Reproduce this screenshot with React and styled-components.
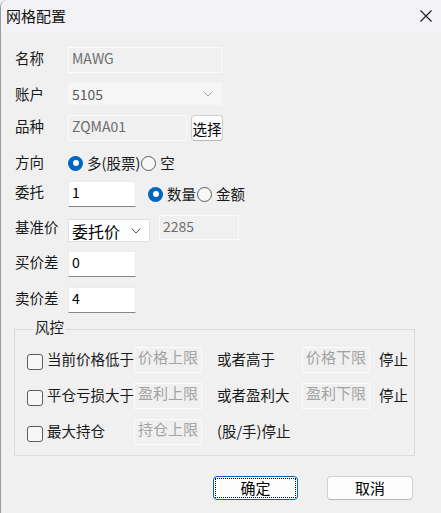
import React from 'react';
import styled, { createGlobalStyle } from 'styled-components';

const GlobalStyle = createGlobalStyle`
  html, body {
    margin: 0;
    padding: 0;
    background: #f0f0f0;
  }
  body {
    font-family: "Noto Sans CJK SC", "Noto Sans", sans-serif;
    font-size: 14.5px;
    color: #1a1a1a;
  }
  * {
    box-sizing: border-box;
  }
`;

const Window = styled.div`
  width: 441px;
  height: 513px;
  background: #f0f0f0;
  border-left: 1px solid #9c9c9c;
  border-top-left-radius: 7px;
  overflow: hidden;
  display: flex;
  flex-direction: column;
`;

const TitleBar = styled.div`
  height: 32px;
  flex: none;
  background: #f3f3f5;
  display: flex;
  align-items: center;
  justify-content: space-between;
  padding: 0 9px 0 5px;
`;

const Title = styled.div`
  font-size: 15px;
  line-height: 20px;
  color: #111;
`;

const Form = styled.div`
  display: flex;
  flex-direction: column;
  padding-left: 14px;
`;

const Row = styled.div`
  display: flex;
  align-items: center;
  height: ${(p) => p.$h}px;
  margin-top: ${(p) => p.$mt}px;
`;

const Label = styled.span`
  width: 53px;
  flex: none;
  line-height: 20px;
  margin-bottom: ${(p) => p.$lift ?? 4}px;
  white-space: nowrap;
`;

const Field = styled.input`
  width: ${(p) => p.$w}px;
  height: ${(p) => p.$h || 26}px;
  font-family: inherit;
  font-size: 14px;
  padding: 0 3px 4px;
  outline: none;
  border-radius: 0;
  ${(p) =>
    p.$editable
      ? `
    background: #ffffff;
    color: #000;
    border: 1px solid #ececec;
    border-bottom: 1px solid #868686;
  `
      : `
    background: #f0f0f0;
    color: #6d6d6d;
    border: 1px solid #fafafa;
  `}
  align-self: ${(p) => p.$align || 'center'};
`;

const SelectBox = styled.div`
  width: ${(p) => p.$w}px;
  height: ${(p) => p.$h}px;
  display: flex;
  align-items: center;
  justify-content: space-between;
  padding: 0 8px 0 3px;
  border: 1px solid ${(p) => (p.$light ? '#f6f6f6' : '#e2e2e2')};
  background: ${(p) => (p.$light ? '#f6f6f6' : '#ffffff')};
  color: ${(p) => (p.$light ? '#5a5a5a' : '#000')};
  font-size: ${(p) => p.$fs}px;
  line-height: 20px;
  align-self: ${(p) => p.$align || 'center'};
`;

const Chevron = ({ color }) => (
  <svg width="10" height="6" viewBox="0 0 10 6">
    <path d="M0.5 0.5 L5 5 L9.5 0.5" fill="none" stroke={color} strokeWidth="1" />
  </svg>
);

const SmallButton = styled.button`
  width: 32px;
  height: 26px;
  margin-left: 4px;
  padding: 0;
  font-family: inherit;
  font-size: 14.5px;
  color: #000;
  background: #fdfdfd;
  border: 1px solid #d0d0d0;
  border-bottom-color: #b8b8b8;
  border-radius: 4px;
`;

const RadioItem = styled.label`
  display: flex;
  align-items: center;
  gap: 4px;
  margin-left: ${(p) => p.$ml || 0}px;
  line-height: 20px;
  white-space: nowrap;
`;

const RadioDot = styled.span`
  width: 15px;
  height: 15px;
  flex: none;
  border-radius: 50%;
  ${(p) =>
    p.$checked
      ? `
    background: #0067c0;
    border: 4.5px solid #0067c0;
    box-shadow: inset 0 0 0 3px #ffffff;
    background: #0067c0;
  `
      : `
    background: #f7f7f7;
    border: 1px solid #5c5c5c;
  `}
`;

const CheckedDot = styled.span`
  width: 15px;
  height: 15px;
  flex: none;
  border-radius: 50%;
  background: #0067c0;
  display: flex;
  align-items: center;
  justify-content: center;
  &::before {
    content: '';
    width: 6px;
    height: 6px;
    border-radius: 50%;
    background: #ffffff;
  }
`;

const Group = styled.fieldset`
  width: 401px;
  margin: 5px 0 0 -1px;
  padding: 0 0 10px 12px;
  border: 1px solid #dcdcdc;
  min-inline-size: 0;
`;

const Legend = styled.legend`
  margin-left: 6px;
  padding: 0 2px 4px;
  font-size: 14.5px;
  line-height: 18px;
`;

const GroupRow = styled.div`
  display: flex;
  align-items: center;
  height: 26px;
  margin-top: ${(p) => p.$mt}px;
`;

const CheckLabel = styled.label`
  width: 107px;
  flex: none;
  display: flex;
  align-items: center;
  gap: 4px;
  white-space: nowrap;
  line-height: 20px;
`;

const CheckBox = styled.span`
  width: 16px;
  height: 16px;
  flex: none;
  border: 1px solid #5c5c5c;
  border-radius: 3px;
  background: #f7f7f7;
  margin-top: 4px;
`;

const CheckText = styled.span`
  margin-bottom: 2px;
`;

const LimitBox = styled.div`
  width: 68px;
  height: 26px;
  flex: none;
  border: 1px solid #fbfbfb;
  background: #f0f0f0;
  color: #a3a3a3;
  font-size: 15px;
  line-height: 18px;
  padding: 0 0 0 3px;
`;

const Plain = styled.span`
  width: ${(p) => (p.$w ? `${p.$w}px` : 'auto')};
  flex: none;
  margin-left: ${(p) => p.$ml}px;
  line-height: 20px;
  margin-bottom: 2px;
  white-space: nowrap;
`;

const Footer = styled.div`
  display: flex;
  justify-content: flex-end;
  gap: 29px;
  padding-right: 28px;
  margin-top: 20px;
`;

const DialogButton = styled.button`
  position: relative;
  width: ${(p) => p.$w}px;
  height: 24px;
  padding: 0 0 2px;
  font-family: inherit;
  font-size: 15px;
  color: #000;
  background: #fdfdfd;
  border-radius: 4px;
  border: 1px solid ${(p) => (p.$primary ? '#0067c0' : '#d0d0d0')};
  border-bottom-color: ${(p) => (p.$primary ? '#0067c0' : '#b8b8b8')};
  &::after {
    content: '';
    display: ${(p) => (p.$primary ? 'block' : 'none')};
    position: absolute;
    inset: 1px;
    border: 1px dotted #000;
    border-radius: 1px;
  }
`;

const CloseIcon = () => (
  <svg width="12" height="12" viewBox="0 0 12 12">
    <path d="M0.5 0.5 L11.5 11.5 M11.5 0.5 L0.5 11.5" stroke="#1a1a1a" strokeWidth="1.1" />
  </svg>
);

const limitRows = [
  { check: '当前价格低于', a: '价格上限', mid: '或者高于', b: '价格下限', tail: '停止' },
  { check: '平仓亏损大于', a: '盈利上限', mid: '或者盈利大', b: '盈利下限', tail: '停止' },
  { check: '最大持仓', a: '持仓上限', mid: '(股/手)停止' },
];

export default function App() {
  return (
    <>
      <GlobalStyle />
      <Window>
        <TitleBar>
          <Title>网格配置</Title>
          <CloseIcon />
        </TitleBar>
        <Form>
          <Row $h={26} $mt={15}>
            <Label>名称</Label>
            <Field $w={154} defaultValue="MAWG" readOnly />
          </Row>
          <Row $h={22} $mt={10}>
            <Label $lift={1}>账户</Label>
            <SelectBox $w={154} $h={22} $fs={14} $light>
              <span>5105</span>
              <Chevron color="#a8a8a8" />
            </SelectBox>
          </Row>
          <Row $h={26} $mt={10}>
            <Label>品种</Label>
            <Field $w={119} defaultValue="ZQMA01" readOnly />
            <SmallButton>选择</SmallButton>
          </Row>
          <Row $h={24} $mt={10}>
            <Label $lift={2}>方向</Label>
            <RadioItem>
              <CheckedDot />
              多(股票)
            </RadioItem>
            <RadioItem $ml={1}>
              <RadioDot />
              空
            </RadioItem>
          </Row>
          <Row $h={26} $mt={6}>
            <Label>委托</Label>
            <Field $w={68} $editable defaultValue="1" />
            <RadioItem $ml={12}>
              <CheckedDot />
              数量
            </RadioItem>
            <RadioItem $ml={1}>
              <RadioDot />
              金额
            </RadioItem>
          </Row>
          <Row $h={27} $mt={8}>
            <Label $lift={3}>基准价</Label>
            <SelectBox $w={82} $h={23} $fs={16} $align="flex-end">
              <span>委托价</span>
              <Chevron color="#555" />
            </SelectBox>
            <Field $w={80} $h={25} $align="flex-start" style={{ marginLeft: 9 }} defaultValue="2285" readOnly />
          </Row>
          <Row $h={26} $mt={9}>
            <Label>买价差</Label>
            <Field $w={68} $editable defaultValue="0" />
          </Row>
          <Row $h={26} $mt={10}>
            <Label>卖价差</Label>
            <Field $w={68} $editable defaultValue="4" />
          </Row>
          <Group>
            <Legend>风控</Legend>
            {limitRows.map((r, i) => (
              <GroupRow key={r.check} $mt={i === 0 ? 7 : 10}>
                <CheckLabel>
                  <CheckBox />
                  <CheckText>{r.check}</CheckText>
                </CheckLabel>
                <LimitBox>{r.a}</LimitBox>
                <Plain $ml={15} $w={r.b ? 85 : 0}>{r.mid}</Plain>
                {r.b && <LimitBox>{r.b}</LimitBox>}
                {r.tail && <Plain $ml={9}>{r.tail}</Plain>}
              </GroupRow>
            ))}
          </Group>
        </Form>
        <Footer>
          <DialogButton $w={85} $primary>确定</DialogButton>
          <DialogButton $w={86}>取消</DialogButton>
        </Footer>
      </Window>
    </>
  );
}
